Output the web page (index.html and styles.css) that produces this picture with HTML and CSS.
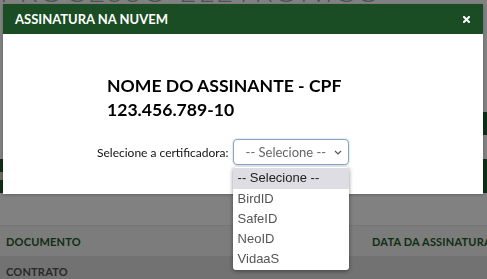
FILE: index.html
```html
<!DOCTYPE html>
<html lang="pt-BR">
  <head>
    <meta charset="UTF-8" />
    <meta name="viewport" content="width=device-width, initial-scale=1.0" />
    <title>Assinatura na nuvem</title>
    <link rel="stylesheet" href="styles.css">
  </head>

  <body>
    <div class="page">
      <h1 class="page-title">PROCESSO ELETRONICO</h1>
      <div class="page-actions">
        <span class="page-btn">E</span>
      </div>
      <nav class="page-nav">
        <span class="nav-item">&nbsp;</span>
      </nav>
      <table class="docs">
        <thead>
          <tr>
            <th class="col-doc">DOCUMENTO</th>
            <th class="col-date">DATA DA ASSINATURA</th>
          </tr>
        </thead>
        <tbody>
          <tr>
            <td>CONTRATO</td>
            <td></td>
          </tr>
        </tbody>
      </table>
    </div>

    <div class="overlay"></div>

    <div class="modal">
      <div class="modal-header">
        <span class="modal-title">ASSINATURA NA NUVEM</span>
        <svg class="modal-close" width="7" height="7" viewBox="0 0 7 7">
          <path d="M1 1 L6 6 M6 1 L1 6" stroke="#fff" stroke-width="2" stroke-linecap="square" />
        </svg>
      </div>
      <div class="modal-body">
        <h2 class="signer">NOME DO ASSINANTE - CPF<br />123.456.789-10</h2>
        <div class="field">
          <label for="certificadora">Selecione a certificadora:</label>
          <div class="select-wrap">
            <select id="certificadora" class="select">
              <option>-- Selecione --</option>
              <option>BirdID</option>
              <option>SafeID</option>
              <option>NeoID</option>
              <option>VidaaS</option>
            </select>
            <ul class="dropdown">
              <li class="active">-- Selecione --</li>
              <li>BirdID</li>
              <li>SafeID</li>
              <li>NeoID</li>
              <li>VidaaS</li>
            </ul>
          </div>
        </div>
      </div>
    </div>
  </body>
</html>
```

FILE: styles.css
```css
body {
  margin: 0;
  background-color: #f8f8f8;
  font-family: "Lato", "Open Sans", sans-serif;
  overflow: hidden;
}

.page {
  height: 279px;
  overflow: hidden;
}

.page-title {
  margin: -25px 0 0 0;
  height: 112px;
  padding-bottom: 25px;
  font-size: 30px;
  font-weight: 300;
  line-height: 30px;
  letter-spacing: 2px;
  color: #9a9a9a;
}

.page-actions {
  display: flex;
  justify-content: flex-end;
  height: 47px;
}

.page-btn {
  width: 40px;
  height: 23px;
  background-color: #1d5a27;
  color: #fff;
  font-size: 12px;
  line-height: 23px;
  padding-left: 2px;
}

.page-nav {
  height: 34px;
  background-color: #1d5a27;
  display: flex;
  align-items: center;
}

.nav-item {
  width: 8px;
  height: 8px;
  background-color: #d9c9b0;
}

.docs {
  margin-top: 32px;
  width: 600px;
  table-layout: fixed;
  border-collapse: collapse;
  white-space: nowrap;
}

.docs th {
  height: 30px;
  padding: 0 6px;
  background-color: #ededed;
  color: #1d5a27;
  font-size: 11px;
  font-weight: 700;
  letter-spacing: 0.2px;
  text-align: left;
  border-top: 1px solid #e2e2e2;
}

.docs th.col-doc {
  width: 354px;
}

.docs td {
  height: 30px;
  padding: 0 6px;
  background-color: #dadada;
  color: #505050;
  font-size: 11px;
  font-weight: 700;
  letter-spacing: 0.2px;
}

.overlay {
  position: fixed;
  inset: 0;
  background-color: rgba(0, 0, 0, 0.48);
}

.modal {
  position: fixed;
  left: 3px;
  top: 4px;
  width: 480px;
  height: 190px;
  background-color: #fff;
  box-shadow: 0 1px 3px rgba(0, 0, 0, 0.25);
}

.modal-header {
  height: 30px;
  background-color: #1a4d23;
  display: flex;
  align-items: center;
  justify-content: space-between;
  padding: 0 13px 0 12px;
}

.modal-title {
  color: #fff;
  font-size: 13px;
  font-weight: 700;
}

.modal-close {
  display: block;
}

.modal-body {
  padding: 40px 0 0 94px;
}

.signer {
  margin: 0 0 0 10px;
  font-family: "Lato", sans-serif;
  font-size: 17.6px;
  font-weight: 700;
  line-height: 24px;
  color: #000;
}

.field {
  display: flex;
  align-items: center;
  margin-top: 17px;
}

.field label {
  font-size: 12px;
  color: #111;
  margin-right: 4px;
}

.select-wrap {
  position: relative;
}

.select {
  appearance: none;
  display: block;
  width: 116px;
  height: 26px;
  border: 1px solid #8fa3bd;
  border-radius: 4px;
  background-color: #fff;
  background-image: url("data:image/svg+xml,%3Csvg xmlns='http://www.w3.org/2000/svg' width='8' height='5' viewBox='0 0 8 5'%3E%3Cpath d='M1 1 L4 4 L7 1' fill='none' stroke='%23555' stroke-width='1.2'/%3E%3C/svg%3E");
  background-repeat: no-repeat;
  background-position: right 6px center;
  color: #666;
  font-family: "Lato", sans-serif;
  font-size: 13px;
  padding: 0 0 0 12px;
  box-shadow: 0 0 0 1px rgba(128, 189, 255, 0.25);
}

.dropdown {
  position: absolute;
  left: 0;
  top: 28px;
  width: 116px;
  margin: 0;
  padding: 1px 0;
  list-style: none;
  background-color: #fff;
  border-radius: 3px;
  box-shadow: 0 1px 4px rgba(0, 0, 0, 0.45);
  font-family: "Liberation Sans", Arial, sans-serif;
  font-size: 13px;
  color: #555;
}

.dropdown li {
  height: 20px;
  line-height: 20px;
  padding-left: 5px;
}

.dropdown li.active {
  height: 21px;
  background-color: #dedde3;
  color: #222;
}
```
